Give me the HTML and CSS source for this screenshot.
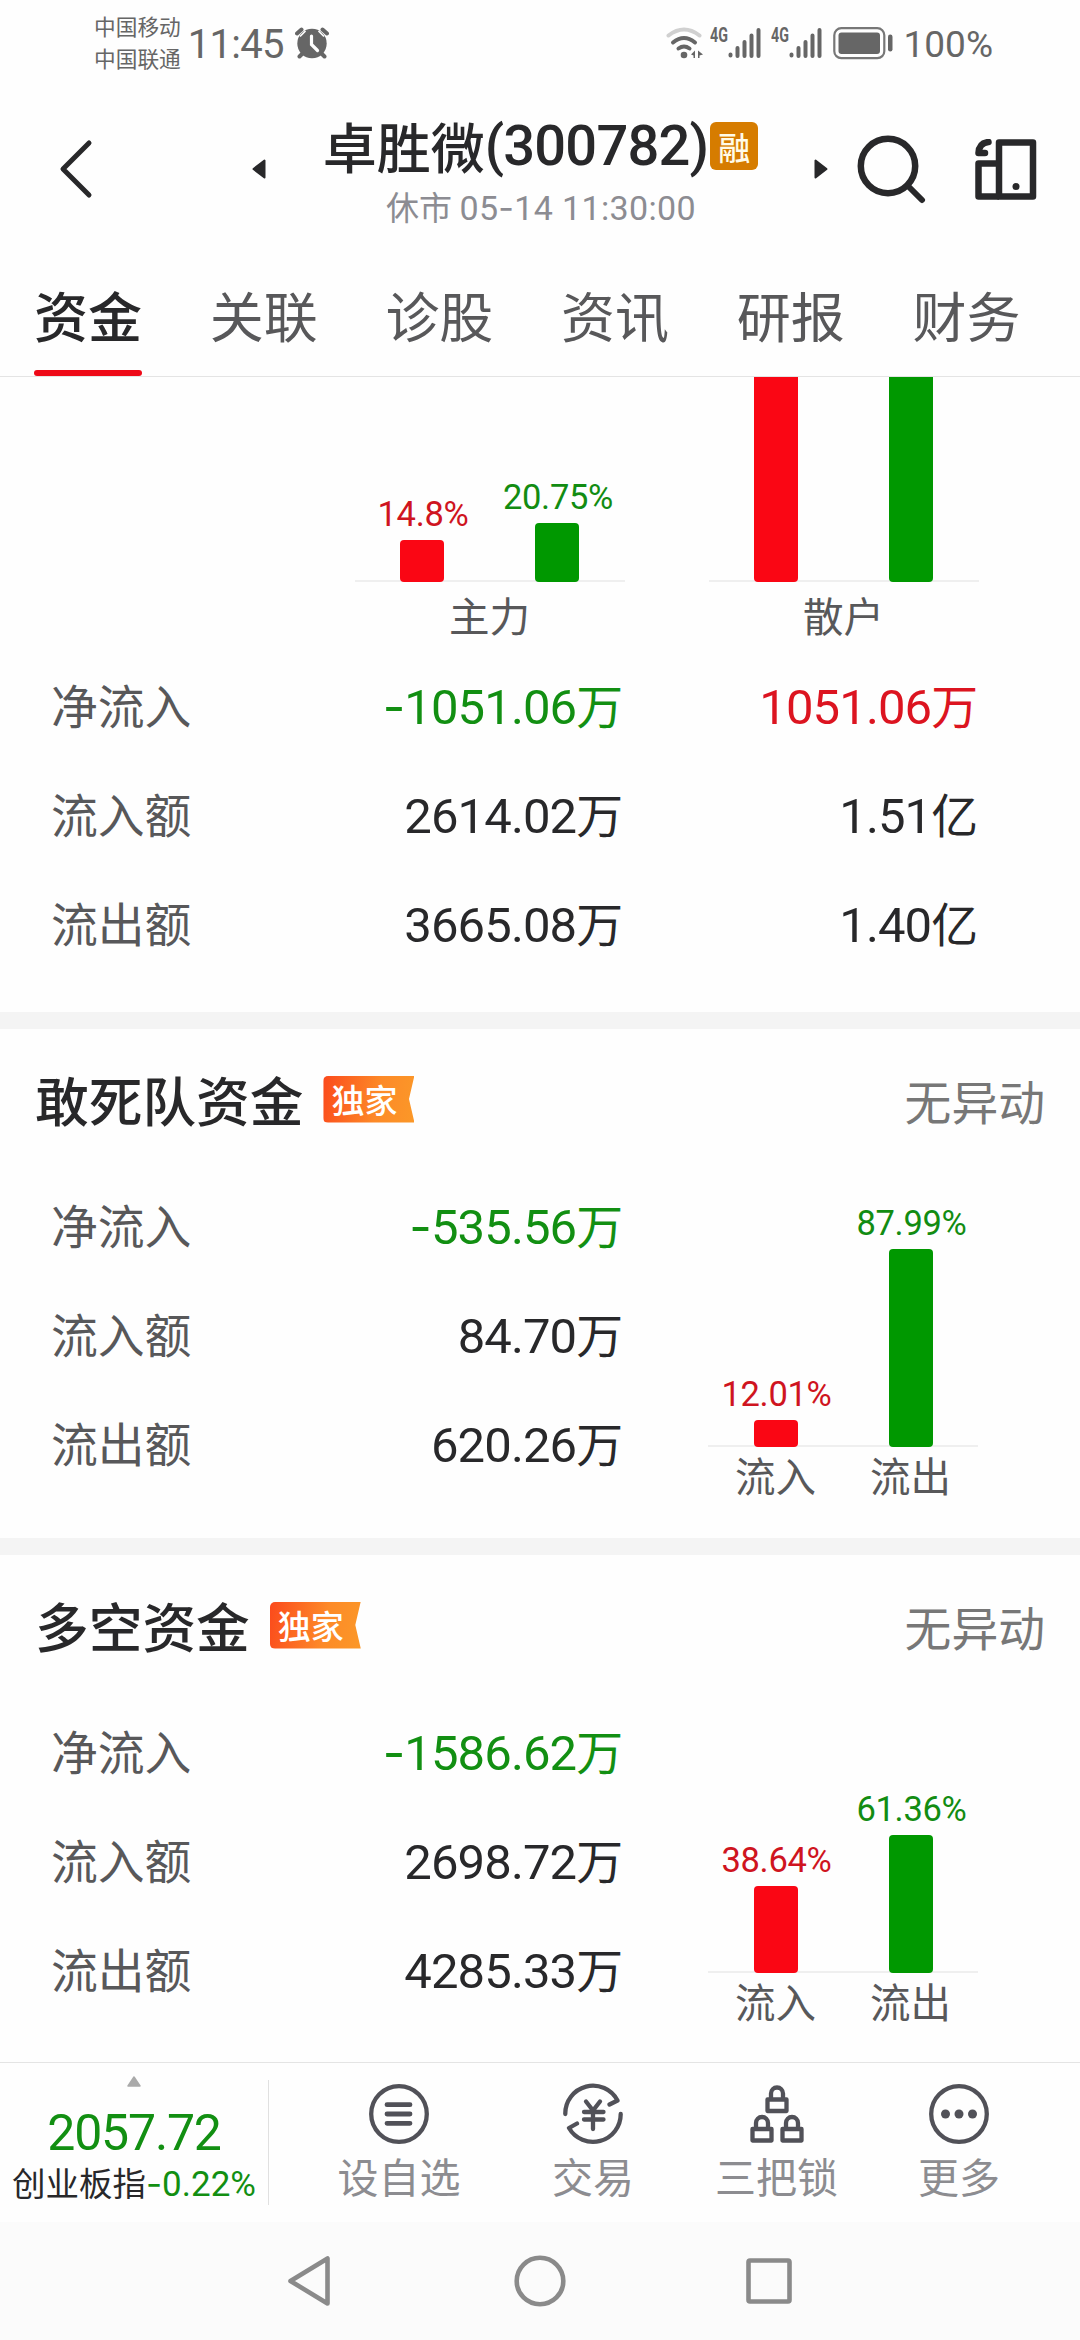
FILE: index.html
```html
<!DOCTYPE html>
<html lang="zh-CN">
<head>
<meta charset="utf-8">
<title>卓胜微(300782)</title>
<link rel="stylesheet" href="styles.css">
</head>
<body>
<div class="status">
  <div class="carriers"><span>中国移动</span><span>中国联通</span></div>
  <span class="clock">11:45</span>
  <svg class="alarm" width="34" height="32" viewBox="0 0 34 32">
    <circle cx="17" cy="16.5" r="14.7" fill="#666"/>
    <path d="M2 6.5 6.5 2.5M32 6.5 27.500 2.500M4.500 29.500 7 27M29.500 29.500 27 27" stroke="#666" stroke-width="4" stroke-linecap="round"/>
    <path d="M5 9.500 10.500 4M29 9.500 23.500 4" stroke="#fefefe" stroke-width="1.600"/>
    <path d="M16.500 9V17.500L22.500 23.500" fill="none" stroke="#fefefe" stroke-width="3.200" stroke-linecap="round"/>
  </svg>
  <div class="indicators">
    <svg width="38" height="32" viewBox="0 0 38 32">
      <g fill="none" stroke="#666" stroke-width="4" stroke-linecap="round">
        <path d="M2.500 8.500Q18 -3.500 33.500 8.500" stroke="#d0d0d0"/>
        <path d="M7 15.500Q18 6.500 29 15.500"/>
        <path d="M12.500 21.500Q18 17.500 23.500 21.500"/>
      </g>
      <circle cx="18" cy="28" r="3.300" fill="#666"/>
      <path d="M29 23.500V31H27.500V28.500L25 27.500ZM32 23.500V31H33.500V28.500L37 27.500Z" fill="#666"/>
    </svg>
    <div class="signal"><span>4G</span><svg width="34" height="32" viewBox="0 0 34 32"><path d="M2.500 27.500V28.500M9.500 21V29M16.500 15V29M23.500 8.500V29M30.500 3V29" stroke="#666" stroke-width="4" stroke-linecap="round"/></svg></div>
    <div class="signal"><span>4G</span><svg width="34" height="32" viewBox="0 0 34 32"><path d="M2.500 27.500V28.500M9.500 21V29M16.500 15V29M23.500 8.500V29M30.500 3V29" stroke="#666" stroke-width="4" stroke-linecap="round"/></svg></div>
    <svg class="battery" width="60" height="34" viewBox="0 0 60 34"><rect x="1.300" y="2.200" width="50" height="30" rx="7" fill="none" stroke="#777" stroke-width="2.200"/><rect x="5.500" y="6.500" width="41.500" height="21.500" rx="3" fill="#666"/><rect x="55" y="8.500" width="4.500" height="17" rx="2.200" fill="#666"/></svg>
    <span class="percent">100%</span>
  </div>
</div>

<header class="header">
  <svg class="back" width="34" height="60" viewBox="0 0 34 60"><path d="M30 4 4 30 30 56" fill="none" stroke="#28282a" stroke-width="5" stroke-linecap="round" stroke-linejoin="round"/></svg>
  <svg class="prev" width="14" height="20" viewBox="0 0 14 20"><path d="M12.500 1.500V18.500L1.500 10Z" fill="#28282a" stroke="#28282a" stroke-width="2" stroke-linejoin="round"/></svg>
  <div class="heading">
    <h1><span>卓胜微</span><span class="code">(300782)</span><span class="margin-tag">融</span></h1>
    <p>休市 <span class="time">05<span class="dash">-</span>14 11:30:00</span></p>
  </div>
  <svg class="next" width="14" height="20" viewBox="0 0 14 20"><path d="M1.500 1.500V18.500L12.500 10Z" fill="#28282a" stroke="#28282a" stroke-width="2" stroke-linejoin="round"/></svg>
  <svg class="search" width="70" height="70" viewBox="0 0 70 70"><circle cx="32" cy="32" r="27.200" fill="none" stroke="#28282a" stroke-width="6.500"/><path d="M52 52 66 66" stroke="#28282a" stroke-width="6" stroke-linecap="round"/></svg>
  <svg class="device" width="62" height="62" viewBox="0 0 62 62"><g fill="none" stroke="#28282a" stroke-width="6.500" stroke-linejoin="round"><rect x="24" y="3.500" width="34" height="54"/><path d="M24 24.500H3.500V57.500H24"/></g><circle cx="41" cy="47.500" r="3.500" fill="#28282a"/><path d="M13.500 3Q4 4 3.500 14H10" fill="none" stroke="#28282a" stroke-width="6.500" stroke-linecap="round" stroke-linejoin="round"/></svg>
</header>

<nav class="tabs">
  <a class="tab active">资金</a><a class="tab">关联</a><a class="tab">诊股</a><a class="tab">资讯</a><a class="tab">研报</a><a class="tab">财务</a>
</nav>

<main>
  <section class="overview">
    <div class="charts">
      <figure>
        <div class="chart">
          <div class="col in"><span>14.8%</span><i style="height:42px"></i></div>
          <div class="col out"><span>20.75%</span><i style="height:59px"></i></div>
        </div>
        <figcaption>主力</figcaption>
      </figure>
      <figure>
        <div class="chart">
          <div class="col in"><i style="height:242px"></i></div>
          <div class="col out"><i style="height:225px"></i></div>
        </div>
        <figcaption>散户</figcaption>
      </figure>
    </div>
    <div class="rows">
      <div class="row"><span class="label">净流入</span><span class="value green"><b><span class="dash">-</span>1051.06</b>万</span><span class="value red"><b>1051.06</b>万</span></div>
      <div class="row"><span class="label">流入额</span><span class="value"><b>2614.02</b>万</span><span class="value"><b>1.51</b>亿</span></div>
      <div class="row"><span class="label">流出额</span><span class="value"><b>3665.08</b>万</span><span class="value"><b>1.40</b>亿</span></div>
    </div>
  </section>

  <section class="fund">
    <div class="fund-head">
      <h2>敢死队资金</h2>
      <span class="exclusive">独家</span>
      <span class="state">无异动</span>
    </div>
    <div class="fund-body">
      <div class="rows">
        <div class="row"><span class="label">净流入</span><span class="value green"><b><span class="dash">-</span>535.56</b>万</span></div>
        <div class="row"><span class="label">流入额</span><span class="value"><b>84.70</b>万</span></div>
        <div class="row"><span class="label">流出额</span><span class="value"><b>620.26</b>万</span></div>
      </div>
      <figure>
        <div class="chart">
          <div class="col in"><span>12.01%</span><i style="height:27px"></i></div>
          <div class="col out"><span>87.99%</span><i style="height:198px"></i></div>
        </div>
        <figcaption><span>流入</span><span>流出</span></figcaption>
      </figure>
    </div>
  </section>

  <section class="fund">
    <div class="fund-head">
      <h2>多空资金</h2>
      <span class="exclusive">独家</span>
      <span class="state">无异动</span>
    </div>
    <div class="fund-body">
      <div class="rows">
        <div class="row"><span class="label">净流入</span><span class="value green"><b><span class="dash">-</span>1586.62</b>万</span></div>
        <div class="row"><span class="label">流入额</span><span class="value"><b>2698.72</b>万</span></div>
        <div class="row"><span class="label">流出额</span><span class="value"><b>4285.33</b>万</span></div>
      </div>
      <figure>
        <div class="chart">
          <div class="col in"><span>38.64%</span><i style="height:87px"></i></div>
          <div class="col out"><span>61.36%</span><i style="height:138px"></i></div>
        </div>
        <figcaption><span>流入</span><span>流出</span></figcaption>
      </figure>
    </div>
  </section>
</main>

<footer class="toolbar">
  <div class="index">
    <svg width="14" height="11" viewBox="0 0 14 11"><path d="M7 1 13 10H1Z" fill="#aaa" stroke="#aaa" stroke-width="1.500" stroke-linejoin="round"/></svg>
    <div class="index-value">2057.72</div>
    <div class="index-name">创业板指<span class="change"><span class="dash">-</span>0.22%</span></div>
  </div>
  <div class="actions">
    <a><svg width="62" height="62" viewBox="0 0 62 62" fill="none" stroke="#515158" stroke-linecap="round"><circle cx="31" cy="31" r="27.800" stroke-width="4.300"/><path d="M19 21.700H42M19 31H42M19 40.300H42" stroke-width="4.800"/></svg><span>设自选</span></a>
    <a><svg width="62" height="62" viewBox="0 0 62 62" fill="none" stroke="#515158" stroke-width="4.300" stroke-linecap="round" stroke-linejoin="round"><path d="M3.300 31A27.700 27.700 0 0 1 55.500 17.500L47.500 21.500M58.700 31A27.700 27.700 0 0 1 7 45L15 40.500"/><path d="M24 18.500 31 27.500 38 18.500M22 29H41.500M22 36.500H41.500M31 28V46"/></svg><span>交易</span></a>
    <a><svg width="62" height="62" viewBox="0 0 62 62" fill="none" stroke="#515158" stroke-width="4.300" stroke-linejoin="round"><path d="M21.500 16.500H40.500V28H21.500ZM25 16V10.500A6 6 0 0 1 37 10.500V16M6.500 46H25.500V57.500H6.500ZM10 46V40A6 6 0 0 1 22 40V46M36.500 46H55.500V57.500H36.500ZM40 46V40A6 6 0 0 1 52 40V46"/></svg><span>三把锁</span></a>
    <a><svg width="62" height="62" viewBox="0 0 62 62"><circle cx="31" cy="31" r="27.800" fill="none" stroke="#515158" stroke-width="4.300"/><g fill="#515158"><circle cx="17.500" cy="31" r="4.500"/><circle cx="31" cy="31" r="4.500"/><circle cx="44.500" cy="31" r="4.500"/></g></svg><span>更多</span></a>
  </div>
</footer>

<div class="sysnav">
  <svg width="46" height="54" viewBox="0 0 46 54"><path d="M41.500 4.500V49.500L4.500 27Z"/></svg>
  <svg width="54" height="54" viewBox="0 0 54 54"><circle cx="27" cy="27" r="23.300"/></svg>
  <svg width="46" height="54" viewBox="0 0 46 54"><rect x="2.500" y="6.500" width="41" height="41" rx="1.500"/></svg>
</div>
</body>
</html>
```
FILE: styles.css
```css
* { box-sizing: border-box; }
body {
  margin: 0;
  width: 1080px;
  height: 2340px;
  overflow: hidden;
  display: flex;
  flex-direction: column;
  background: #fefefe;
  color: #28282a;
  font-family: "Noto Sans CJK SC", sans-serif;
}
svg { display: block; flex: none; }
figure, h1, h2, p { margin: 0; font-weight: 500; }
.dash { font-family: Inter, sans-serif; }

/* status bar */
.status {
  height: 88px;
  flex: none;
  display: flex;
  align-items: center;
  padding: 0 87px 2px 94px;
  color: #666;
}
.carriers { display: flex; flex-direction: column; font-size: 21.7px; line-height: 32px; white-space: nowrap; margin-top: -2px; }
.clock { font: 40px/60px Roboto, sans-serif; letter-spacing: -.7px; margin: 3px 0 0 7px; width: 106px; flex: none; }
.alarm { margin-left: 1px; }
.indicators { display: flex; align-items: center; margin-left: auto; }
.signal { display: flex; margin-left: 6px; }
.signal span { font: 700 21px/17px Roboto, sans-serif; width: 18px; transform: scaleX(.68); transform-origin: left; }
.signal + .signal { margin-left: 9px; }
.battery { margin-left: 10px; }
.percent { font: 37px/60px Roboto, sans-serif; margin: 3px 0 0 11px; }

/* title bar */
.header {
  height: 166px;
  flex: none;
  display: flex;
  align-items: flex-start;
  padding-left: 59px;
}
.back { margin-top: 51px; }
.prev, .next { margin-top: 71px; }
.prev { margin-left: 159px; }
.heading { width: 548px; flex: none; padding-top: 20px; text-align: center; }
h1 { display: flex; justify-content: center; align-items: center; height: 76px; font-size: 54px; line-height: 76px; padding-left: 1px; }
.code { font-family: Roboto, sans-serif; font-size: 56px; letter-spacing: -.8px; }
.margin-tag { width: 48px; height: 48px; margin-left: 2px; border-radius: 6px; background: #d67c00; color: #fffbe8; font-size: 32px; line-height: 48px; text-align: center; }
.heading p { height: 44px; line-height: 44px; font-size: 33px; font-weight: 400; color: #8c8c92; padding-left: 2px; }
.time { font-family: Roboto, sans-serif; font-size: 34px; letter-spacing: .35px; }
.search { margin: 46px 0 0 28px; }
.device { margin: 51px 0 0 49px; }

/* tabs */
.tabs {
  height: 123px;
  flex: none;
  display: flex;
  gap: 67.700px;
  padding-left: 34px;
  border-bottom: 1px solid #e4e4e4;
}
.tab { width: 108px; font-size: 54px; line-height: 121px; text-align: center; color: #58585a; white-space: nowrap; position: relative; }
.active { color: #28282a; font-weight: 500; }
.active::after { content: ""; position: absolute; left: 0; bottom: 0; width: 108px; height: 6px; border-radius: 3px; background: #ee0a18; }

/* bar charts */
.chart {
  display: grid;
  grid-template-columns: 135px 135px;
  align-items: end;
  width: 270px;
  background: linear-gradient(#efefef, #efefef) bottom / 100% 2px no-repeat;
}
.col { display: flex; flex-direction: column; align-items: center; justify-content: flex-end; font: 34.500px/40px Roboto, sans-serif; }
.col span { margin-bottom: 6px; letter-spacing: -.3px; padding-left: 2px; }
.col i { width: 44px; flex: none; border-radius: 4px; }
.in { color: #cf1420; }
.in i { background: #fa0614; }
.out { color: #128c12; }
.out i { background: #009800; }
figcaption { font-size: 40.500px; font-weight: 400; color: #58585a; text-align: center; }

/* data rows */
.row { display: flex; height: 109px; line-height: 109px; font-size: 46.800px; white-space: nowrap; }
.label { width: 300px; color: #58585a; }
.value { width: 272px; text-align: right; }
.value + .value { width: 355px; }
.value b { font: 400 49px Roboto, sans-serif; letter-spacing: -.9px; }
.green { color: #128f12; }
.red { color: #dc1420; }

.overview { height: 635px; }
.charts { display: flex; gap: 84px; padding-left: 354.500px; }
.charts .chart { height: 205px; overflow: hidden; }
.charts .col { max-height: 205px; }
.charts figcaption { height: 67px; line-height: 66px; }
.overview .rows, .fund .rows { padding-left: 51px; }

/* fund sections */
.fund { height: 526px; border-top: 17px solid #f4f4f4; }
.fund-head { display: flex; align-items: center; height: 140px; padding: 0 35px; }
h2 { font-size: 53.700px; line-height: 140px; }
.exclusive {
  width: 91px;
  height: 47px;
  margin: 0 0 0 20px;
  padding-left: 8px;
  border-radius: 5px 0 0 5px;
  clip-path: polygon(0 0, 100% 0, 94% 50%, 100% 100%, 0 100%);
  background: linear-gradient(100deg, #fb4a1c, #fd8a28 60%, #fb9828);
  color: #fff;
  font-size: 33px;
  font-weight: 500;
  line-height: 47px;
}
.state { margin-left: auto; font-size: 46.800px; color: #777; }
.fund-body { display: flex; }
.fund-body .chart { height: 278px; }
.fund-body figure { margin-left: 85px; }
.fund-body figcaption { display: grid; grid-template-columns: 135px 135px; line-height: 56px; }

/* bottom toolbar */
main { height: 1685px; flex: none; overflow: hidden; }
.toolbar { height: 160px; flex: none; display: flex; border-top: 1px solid #e4e4e4; }
.index { width: 269px; height: 125px; margin: 17px 28px 0 0; border-right: 1px solid #e0e0e0; display: flex; flex-direction: column; align-items: center; }
.index > svg { margin-top: -4px; }
.index-value { font: 50px/60px Roboto, sans-serif; letter-spacing: -1.200px; color: #128f12; margin-top: 16px; }
.index-name { font-size: 33.500px; line-height: 40px; margin-top: -1px; white-space: nowrap; }
.change { font: 35px Roboto, sans-serif; color: #128f12; }
.actions { display: grid; grid-template-columns: 204px 184px 183px 182px; }
.actions a { display: flex; flex-direction: column; align-items: center; padding-top: 20px; }
.actions span { font-size: 41px; line-height: 60px; color: #8c8c90; }

/* system navigation */
.sysnav { height: 118px; flex: none; display: flex; align-items: center; justify-content: center; gap: 179px; background: #fbfbfb; }
.sysnav svg { fill: none; stroke: #8a8a8a; stroke-width: 4.600px; stroke-linejoin: round; }
.sysnav svg:first-child { margin: 0 2px 0 -2px; }
```
